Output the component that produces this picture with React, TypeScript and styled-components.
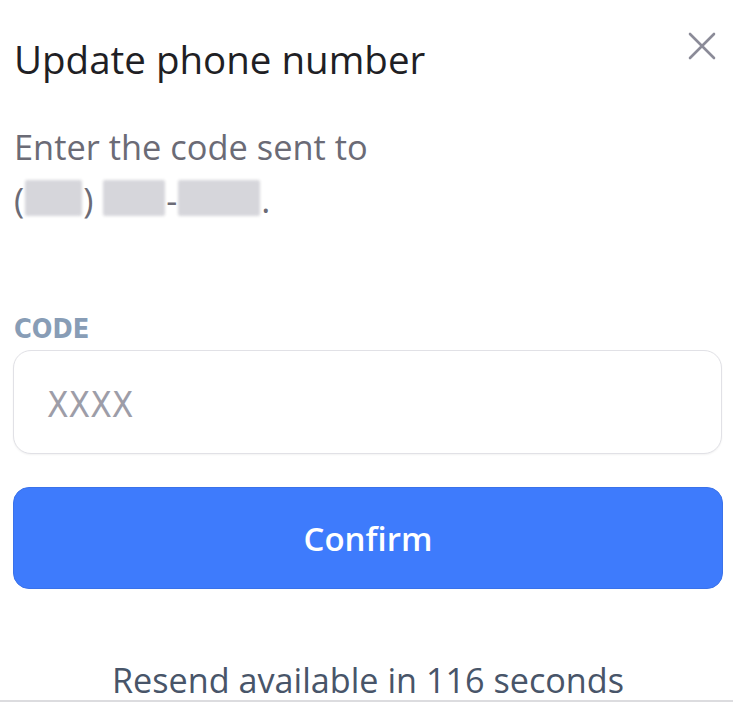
import React from 'react';
import styled, { createGlobalStyle } from 'styled-components';

const GlobalStyle = createGlobalStyle`
    html, body {
        margin: 0;
        padding: 0;
        background: #ffffff;
    }
    body {
        font-family: "Open Sans", "Noto Sans", sans-serif;
        -webkit-font-smoothing: antialiased;
    }
`;

const Sheet = styled.div`
    box-sizing: border-box;
    width: 733px;
    height: 702px;
    padding: 37px 10px 0 13px;
    border-bottom: 2px solid #dcdcdf;
    overflow: hidden;
    display: flex;
    flex-direction: column;
`;

const Header = styled.div`
    display: flex;
    justify-content: space-between;
    align-items: flex-start;
`;

const Title = styled.h1`
    margin: 0 0 0 1px;
    font-size: 38.5px;
    line-height: 44px;
    font-weight: 500;
    color: #1f1f25;
`;

const CloseButton = styled.button`
    border: 0;
    background: none;
    padding: 0;
    margin: -8px 4px 0 0;
    width: 34px;
    height: 34px;
    display: flex;
    align-items: center;
    justify-content: center;
    cursor: pointer;
`;

const Description = styled.p`
    margin: 39px 0 0 1px;
    font-size: 34.4px;
    line-height: 53px;
    color: #6b6b76;
`;

const Masked = styled.span<{ w: number }>`
    display: inline-block;
    width: ${({ w }): number => w}px;
    height: 36px;
    margin: 0 1px;
    vertical-align: -3px;
    background: #d6d6db;
    border-radius: 2px;
    filter: blur(1.5px);
`;

const Field = styled.div`
    margin-top: 88px;
    display: flex;
    flex-direction: column;
    gap: 6px;
`;

const Label = styled.label`
    margin-left: 1px;
    font-family: "DejaVu Sans Condensed", "DejaVu Sans", sans-serif;
    font-stretch: condensed;
    font-size: 27px;
    line-height: 30px;
    font-weight: 600;
    color: #889db6;
`;

const Input = styled.input`
    box-sizing: border-box;
    width: 709px;
    height: 104px;
    padding: 6px 33px 0;
    border: 1.5px solid #e1e1e6;
    border-radius: 18px;
    background: #ffffff;
    box-shadow: 0 1px 2px rgba(0, 0, 0, 0.05);
    font-family: "DejaVu Sans Condensed", "DejaVu Sans", sans-serif;
    font-stretch: condensed;
    font-size: 35px;
    color: #333;
    outline: none;

    &::placeholder {
        color: #9d9da8;
    }
`;

const ConfirmButton = styled.button`
    margin-top: 33px;
    width: 710px;
    height: 104px;
    border: 1px solid #3a72ea;
    border-radius: 16px;
    background: #3e7bfc;
    color: #ffffff;
    font-family: "Open Sans", sans-serif;
    font-size: 33px;
    font-weight: 600;
    cursor: pointer;
`;

const ResendNote = styled.p`
    margin: 71px 0 0;
    text-align: center;
    font-size: 34.2px;
    line-height: 40px;
    color: #485569;
`;

const CloseIcon = (): React.ReactElement => (
    <svg width="28" height="28" viewBox="0 0 28 28" fill="none">
        <path d="M2 2L26 26M26 2L2 26" stroke="#8b8b98" strokeWidth="2.6" strokeLinecap="round" />
    </svg>
);

const App = (): React.ReactElement => (
    <>
        <GlobalStyle />
        <Sheet>
            <Header>
                <Title>Update phone number</Title>
                <CloseButton aria-label="Close">
                    <CloseIcon />
                </CloseButton>
            </Header>
            <Description>
                Enter the code sent to
                <br />
                (<Masked w={57} />) <Masked w={62} />-<Masked w={82} />.
            </Description>
            <Field>
                <Label htmlFor="code">CODE</Label>
                <Input id="code" placeholder="XXXX" />
            </Field>
            <ConfirmButton>Confirm</ConfirmButton>
            <ResendNote>Resend available in 116 seconds</ResendNote>
        </Sheet>
    </>
);

export default App;
